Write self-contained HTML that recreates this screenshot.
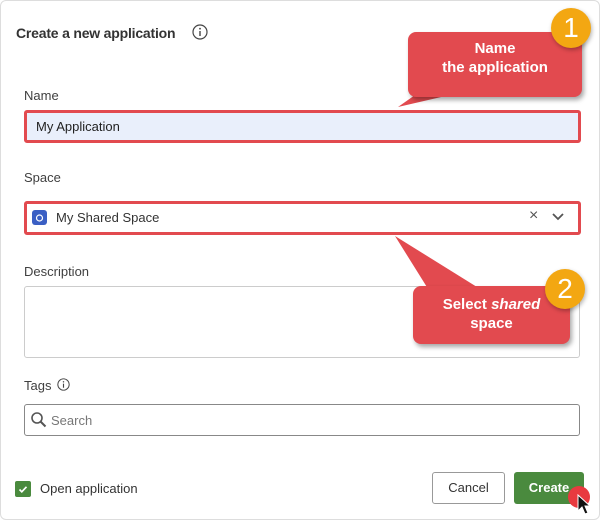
<!DOCTYPE html>
<html><head><style>
body{margin:0;width:600px;height:520px;background:#fff;font-family:"Liberation Sans",sans-serif;position:relative;overflow:hidden;color:#404040}
.a{position:absolute}
.lbl{font-size:13px;color:#404040}
.inp{position:absolute;box-sizing:border-box;border-radius:3px}
.call{position:absolute;background:#e24a4f;border-radius:8px;color:#fff;font-weight:bold;font-size:15px;text-align:center;line-height:19px;box-shadow:2px 3px 5px rgba(0,0,0,.35)}
.badge{position:absolute;width:40px;height:40px;border-radius:50%;background:#f3a712;color:#fff;font-size:28px;text-align:center;line-height:40px;box-shadow:1px 2px 4px rgba(0,0,0,.3)}
</style></head><body>
<div class="a" style="left:0;top:0;width:598px;height:518px;border:1px solid #ddd;border-radius:6px"></div>
<div class="a" style="left:16px;top:25px;font-size:14px;font-weight:bold;color:#333;letter-spacing:-0.2px">Create a new application</div>
<svg class="a" style="left:192px;top:24px" width="16" height="16" viewBox="0 0 16 16"><circle cx="8" cy="8" r="7" fill="none" stroke="#444" stroke-width="1.2"/><rect x="7.3" y="7" width="1.4" height="5" fill="#444"/><circle cx="8" cy="4.7" r=".9" fill="#444"/></svg>

<div class="a lbl" style="left:24px;top:88px">Name</div>
<div class="inp" style="left:24px;top:110px;width:557px;height:33px;background:#e9effb;border:3px solid #e24a4f"></div>
<div class="a" style="left:36px;top:119px;font-size:13px;color:#222">My Application</div>

<div class="a lbl" style="left:24px;top:170px">Space</div>
<div class="inp" style="left:24px;top:201px;width:557px;height:34px;background:#fff;border:3px solid #e24a4f"></div>
<div class="a" style="left:32px;top:210px;width:15px;height:15px;background:#3a5fc4;border-radius:3px"></div>
<svg class="a" style="left:34px;top:212px" width="11" height="11" viewBox="0 0 11 11"><circle cx="5.5" cy="6" r="3" fill="none" stroke="#fff" stroke-width="1.2"/></svg>
<div class="a" style="left:56px;top:210px;font-size:13px;color:#333">My Shared Space</div>
<div class="a" style="left:529px;top:207px;font-size:16px;color:#555">×</div>
<svg class="a" style="left:551px;top:212px" width="14" height="10" viewBox="0 0 14 10"><path d="M2 2l5 5 5-5" fill="none" stroke="#555" stroke-width="1.8"/></svg>

<div class="a lbl" style="left:24px;top:264px">Description</div>
<div class="inp" style="left:24px;top:286px;width:556px;height:72px;border:1px solid #ccc"></div>

<div class="a lbl" style="left:24px;top:378px">Tags</div>
<svg class="a" style="left:57px;top:378px" width="13" height="13" viewBox="0 0 16 16"><circle cx="8" cy="8" r="7" fill="none" stroke="#444" stroke-width="1.2"/><rect x="7.3" y="7" width="1.4" height="5" fill="#444"/><circle cx="8" cy="4.7" r=".9" fill="#444"/></svg>
<div class="inp" style="left:24px;top:404px;width:556px;height:32px;border:1px solid #888"></div>
<svg class="a" style="left:30px;top:411px" width="18" height="18" viewBox="0 0 18 18"><circle cx="7" cy="7" r="5" fill="none" stroke="#555" stroke-width="1.6"/><path d="M10.5 10.5l5 5" stroke="#555" stroke-width="2"/></svg>
<div class="a" style="left:51px;top:413px;font-size:13px;color:#777">Search</div>

<div class="a" style="left:15px;top:481px;width:16px;height:16px;background:#4a8a3e;border-radius:2px"></div>
<svg class="a" style="left:17px;top:483px" width="12" height="12" viewBox="0 0 12 12"><path d="M2.5 6.5l2.3 2.3 4.7-5" fill="none" stroke="#fff" stroke-width="1.7"/></svg>
<div class="a" style="left:40px;top:481px;font-size:13px;color:#333">Open application</div>
<div class="inp" style="left:432px;top:472px;width:73px;height:32px;border:1px solid #999;background:#fff"></div>
<div class="a" style="left:432px;top:480px;width:73px;text-align:center;font-size:13px;color:#333">Cancel</div>
<div class="inp" style="left:514px;top:472px;width:70px;height:32px;background:#4a8a3e"></div>
<div class="a" style="left:514px;top:480px;width:70px;text-align:center;font-size:13px;color:#fff;font-weight:bold">Create</div>
<div class="a" style="left:568px;top:486px;width:22px;height:22px;border-radius:50%;background:#e83a3f"></div>
<svg class="a" style="left:577px;top:494px" width="14" height="22" viewBox="0 0 14 22"><path d="M1 1v16l4-4 3 7 3-1-3-7h5z" fill="#111" stroke="#fff" stroke-width="1"/></svg>

<svg class="a" style="left:0;top:0" width="600" height="520"><polygon points="425,88 480,88 398,107" fill="#e24a4f"/><polygon points="430,292 485,292 395,236" fill="#e24a4f"/></svg>
<div class="call" style="left:408px;top:32px;width:174px;height:65px;padding-top:7px;box-sizing:border-box">Name<br>the application</div>
<div class="badge" style="left:551px;top:8px">1</div>
<div class="call" style="left:413px;top:286px;width:157px;height:58px;padding-top:9px;box-sizing:border-box">Select <i>shared</i><br>space</div>
<div class="badge" style="left:545px;top:269px">2</div>
</body></html>
